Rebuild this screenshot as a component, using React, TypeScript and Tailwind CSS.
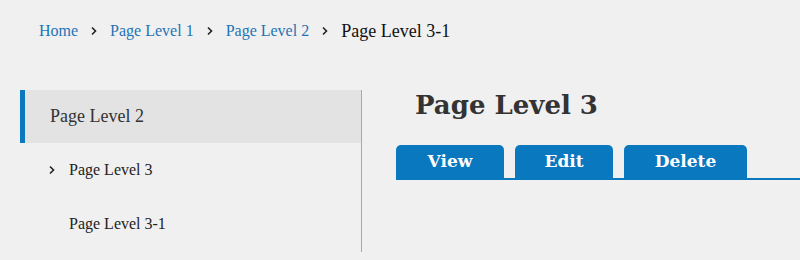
const crumbs = ['Home', 'Page Level 1', 'Page Level 2']

const Chevron = ({ className }: { className?: string }) => (
  <svg viewBox="0 0 8 10" className={className} fill="none" stroke="currentColor" strokeWidth="1.6">
    <path d="M2 1.5 5.5 5 2 8.5" />
  </svg>
)

const App: React.FC = () => {
  const tabs = [
    { label: 'View', className: 'w-[108px]' },
    { label: 'Edit', className: 'w-[98px]' },
    { label: 'Delete', className: 'w-[123px]' },
  ]

  return (
    <div className="h-[260px] w-[800px] overflow-hidden bg-[#f0f0f0] font-['Liberation_Serif',serif] text-[#333]">
      {/* breadcrumb */}
      <nav className="flex h-[60px] items-center pl-[39px] pt-[2px] text-[16px]">
        {crumbs.map((c) => (
          <span key={c} className="flex items-center">
            <a href="#" className="text-[#1f74b4]">
              {c}
            </a>
            <Chevron className="mx-[12px] h-[10px] w-[8px] text-[#222]" />
          </span>
        ))}
        <span className="text-[18px] text-[#111]">Page Level 3-1</span>
      </nav>

      <div className="mt-[30px] flex">
        {/* side menu */}
        <aside className="ml-[20px] h-[162px] w-[342px] border-r border-[#a8a8a8]">
          <div className="flex h-[53px] items-center border-l-[5px] border-[#0a78be] bg-[#e3e3e3] pl-[25px] text-[18px] text-[#333]">
            Page Level 2
          </div>
          <div className="flex h-[54px] items-center pl-[28px] text-[16px] text-[#222]">
            <Chevron className="mr-[13px] h-[10px] w-[8px]" />
            Page Level 3
          </div>
          <div className="flex h-[54px] items-center pl-[49px] text-[16px] text-[#222]">Page Level 3-1</div>
        </aside>

        {/* content */}
        <main className="flex-1 pl-[34px]">
          <h1 className="h-[55px] pl-[19px] font-['DejaVu_Serif',serif] text-[26px] font-bold leading-[30px] text-[#333]">
            Page Level 3
          </h1>
          <div className="flex gap-[11px] border-b-2 border-[#0a78be]">
            {tabs.map((t) => (
              <button
                key={t.label}
                className={`${t.className} h-[33px] rounded-t-[5px] bg-[#0a78be] pt-[1px] font-['DejaVu_Serif',serif] text-[17px] font-bold text-white`}
              >
                {t.label}
              </button>
            ))}
          </div>
        </main>
      </div>
    </div>
  )
}

export default App
